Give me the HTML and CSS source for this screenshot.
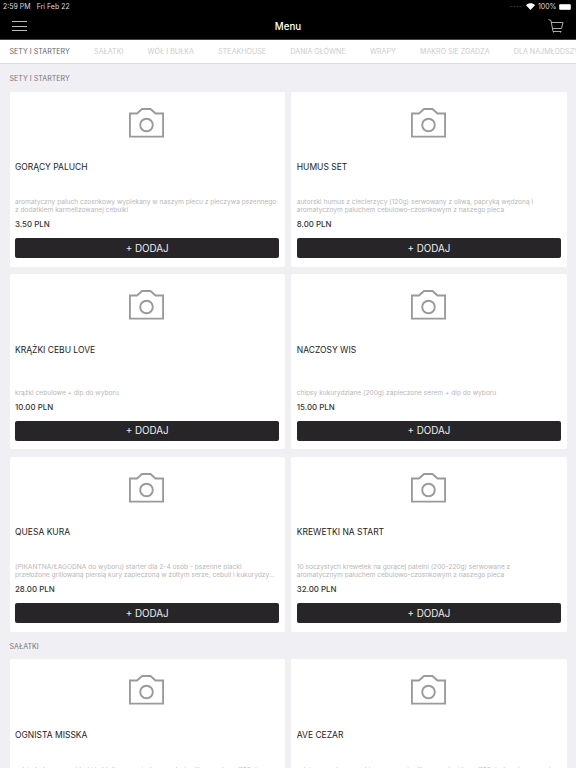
FILE: index.html
```html
<!DOCTYPE html>
<html lang="pl">
<head>
<meta charset="utf-8">
<title>Menu</title>
<link rel="stylesheet" href="styles.css">
</head>
<body>
<svg class="sprite" width="0" height="0">
  <symbol id="cam" viewBox="0 0 35 30">
    <path d="M.9 5.500H8L13 1H21.500L26.500 5.500H34.100V28.600H.9Z" fill="none" stroke="#9a9a9a" stroke-width="1.900"/>
    <circle cx="17.500" cy="17" r="6.300" fill="none" stroke="#9a9a9a" stroke-width="1.900"/>
  </symbol>
</svg>
<header class="top">
  <div class="status">
    <span class="status-left"><span>2:59 PM</span><span>Fri Feb 22</span></span>
    <span class="status-right">
      <span class="dots">····</span>
      <svg class="wifi" viewBox="0 0 12 9" width="9" height="7"><path d="M6 9L0 2.800C3.500-.7 8.500-.7 12 2.800Z" fill="#fff"/></svg>
      <span>100%</span>
      <span class="battery"><span class="battery-fill"></span></span>
    </span>
  </div>
  <div class="navbar">
    <button class="burger" aria-label="Menu"><span></span><span></span><span></span></button>
    <h1 class="nav-title">Menu</h1>
    <svg class="cart" viewBox="0 0 16 14" width="16" height="14"><path d="M.5 .5L3 1.500L5 12.500H13.500M3.500 3.500H15L13.500 9.500H4.500" fill="none" stroke="#bdbdbd" stroke-width=".9"/><path d="M5.500 12.500v1M12.500 12.500v1" stroke="#bdbdbd"/></svg>
  </div>
</header>
<nav class="tabs">
  <span class="tab active">SETY I STARTERY</span>
  <span class="tab">SAŁATKI</span>
  <span class="tab">WÓŁ I BUŁKA</span>
  <span class="tab">STEAKHOUSE</span>
  <span class="tab">DANIA GŁÓWNE</span>
  <span class="tab">WRAPY</span>
  <span class="tab">MAKRO SIE ZGADZA</span>
  <span class="tab">DLA NAJMŁODSZYCH</span>
</nav>
<main class="content">
  <h2 class="section">SETY I STARTERY</h2>
  <div class="grid">
    <article class="card">
      <svg class="photo"><use href="#cam"/></svg>
      <h3 class="name">GORĄCY PALUCH</h3>
      <p class="desc">aromatyczny paluch czosnkowy wypiekany w naszym piecu z pieczywa pszennego z dodatkiem karmelizowanej cebulki</p>
      <p class="price">3.50 PLN</p>
      <button class="add">+ DODAJ</button>
    </article>
    <article class="card">
      <svg class="photo"><use href="#cam"/></svg>
      <h3 class="name">HUMUS SET</h3>
      <p class="desc">autorski humus z ciecierzycy (120g) serwowany z oliwą, papryką wędzoną i aromatycznym paluchem cebulowo-czosnkowym z naszego pieca</p>
      <p class="price">8.00 PLN</p>
      <button class="add">+ DODAJ</button>
    </article>
    <article class="card">
      <svg class="photo"><use href="#cam"/></svg>
      <h3 class="name">KRĄŻKI CEBU LOVE</h3>
      <p class="desc">krążki cebulowe + dip do wyboru</p>
      <p class="price">10.00 PLN</p>
      <button class="add">+ DODAJ</button>
    </article>
    <article class="card">
      <svg class="photo"><use href="#cam"/></svg>
      <h3 class="name">NACZOSY WIS</h3>
      <p class="desc">chipsy kukurydziane (200g) zapieczone serem + dip do wyboru</p>
      <p class="price">15.00 PLN</p>
      <button class="add">+ DODAJ</button>
    </article>
    <article class="card">
      <svg class="photo"><use href="#cam"/></svg>
      <h3 class="name">QUESA KURA</h3>
      <p class="desc">(PIKANTNA/ŁAGODNA do wyboru) starter dla 2-4 osób - pszenne placki<br>przełożone grillowaną piersią kury zapieczoną w żółtym serze, cebuli i kukurydzy...</p>
      <p class="price">28.00 PLN</p>
      <button class="add">+ DODAJ</button>
    </article>
    <article class="card">
      <svg class="photo"><use href="#cam"/></svg>
      <h3 class="name">KREWETKI NA START</h3>
      <p class="desc">10 soczystych krewetek na gorącej patelni (200-220g) serwowane z<br>aromatycznym paluchem cebulowo-czosnkowym z naszego pieca</p>
      <p class="price">32.00 PLN</p>
      <button class="add">+ DODAJ</button>
    </article>
  </div>
  <h2 class="section">SAŁATKI</h2>
  <div class="grid">
    <article class="card">
      <svg class="photo"><use href="#cam"/></svg>
      <h3 class="name">OGNISTA MISSKA</h3>
      <p class="desc">sałata lodowa, pomidorki koktajlowe, ogórek, papryka i grillowana kura (180g), dressing ostry i grzanki z naszego pieca</p>
      <p class="price">24.00 PLN</p>
      <button class="add">+ DODAJ</button>
    </article>
    <article class="card">
      <svg class="photo"><use href="#cam"/></svg>
      <h3 class="name">AVE CEZAR</h3>
      <p class="desc">sałata rzymska, grzanki, parmezan i grillowana pierś kury (180g), dressing cezar i oliwa z naszego pieca</p>
      <p class="price">24.00 PLN</p>
      <button class="add">+ DODAJ</button>
    </article>
  </div>
</main>
</body>
</html>
```
FILE: styles.css
```css
* { box-sizing: border-box; margin: 0; padding: 0; }
html, body { height: 768px; overflow: hidden; }
body { background: #efeff4; font-family: Inter, "Liberation Sans", sans-serif; color: #222; }
.sprite { display: block; }
.top { background: #000; color: #fff; height: 40px; border-bottom: 1px solid #444; }
.status { height: 13px; display: flex; justify-content: space-between; align-items: center; padding: 0 5px 0 3px; font-size: 7px; color: #ddd; }
.status-left { display: flex; gap: 6px; }
.status-right { display: flex; align-items: center; gap: 2.500px; }
.dots { color: #777; letter-spacing: 1px; margin-right: 2px; }
.battery { width: 12px; height: 6px; border: 1px solid #ccc; display: block; border-radius: 1px; }
.battery-fill { display: block; height: 100%; background: #fff; }
.navbar { height: 26px; display: flex; align-items: center; justify-content: space-between; padding: 0 12px 0 12px; position: relative; }
.burger { width: 15px; height: 10px; display: flex; flex-direction: column; justify-content: space-between; background: none; border: 0; }
.burger span { display: block; height: 1px; background: #bbb; }
.nav-title { font-size: 9.750px; font-weight: 500; position: absolute; left: 0; right: 0; text-align: center; }
.cart { display: block; }
.tabs { height: 24px; background: #fff; border-bottom: 1px solid #dcdce0; display: flex; align-items: center; gap: 24.300px; padding-left: 9.500px; white-space: nowrap; overflow: hidden; font-size: 7.100px; color: #ccc; }
.tab.active { color: #666; }
.content { padding: 0 9.500px; }
.section { font-size: 7.100px; font-weight: 400; color: #777; height: 27.500px; line-height: 30px; }
.grid { display: grid; grid-template-columns: 1fr 1fr; column-gap: 6.500px; row-gap: 7.500px; }
.card { background: #fff; border-radius: 2px; height: 175px; padding: 0 5.500px; display: flex; flex-direction: column; }
.photo { width: 35px; height: 30px; margin: 16px auto 0 calc(50% - 18.250px); display: block; flex: none; }
.name { font-size: 8.500px; font-weight: 400; margin-top: 23.500px; line-height: 12px; color: #222; }
.desc { font-size: 6.620px; line-height: 8px; color: #b8b8b8; margin-top: auto; white-space: normal; }
.price { font-size: 7.900px; font-weight: 500; line-height: 10px; margin-top: 5px; color: #333; }
.add { height: 20px; margin: 9px 0 8.500px; background: #272527; color: #eee; border: 0; border-radius: 2px; font: 400 9.800px Inter, "Liberation Sans", sans-serif; flex: none; }
```
